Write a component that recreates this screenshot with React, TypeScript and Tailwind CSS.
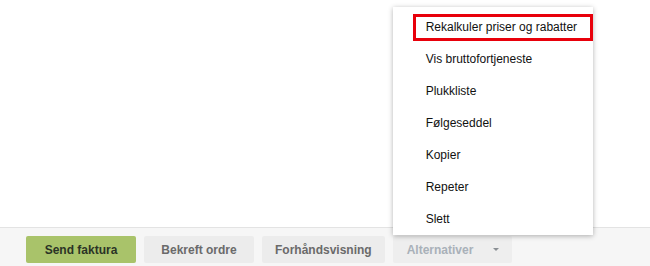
import { useState } from "react";

const menuItems = [
  "Rekalkuler priser og rabatter",
  "Vis bruttofortjeneste",
  "Plukkliste",
  "Følgeseddel",
  "Kopier",
  "Repeter",
  "Slett",
];

export default function App() {
  const [open, setOpen] = useState(true);

  return (
    <div
      className="w-[650px] h-[266px] flex flex-col bg-white overflow-hidden"
      style={{ fontFamily: '"Liberation Sans", Arial, sans-serif' }}
    >
      <div className="flex-1" />

      {/* Footer actions */}
      <div className="h-[39px] border-t border-[#e3e3e3] bg-[#f6f6f6] flex items-start gap-2 pl-[26px] pt-[8px]">
        <button className="h-[27px] min-w-[110px] px-[13px] rounded-[2px] bg-[#a9c36a] text-[12px] font-bold text-[#2b3326]">
          Send faktura
        </button>
        <button className="h-[27px] min-w-[110px] px-[13px] rounded-[2px] bg-[#ececec] text-[12px] font-bold text-[#6a6a6a]">
          Bekreft ordre
        </button>
        <button className="h-[27px] min-w-[110px] px-[13px] rounded-[2px] bg-[#ececec] text-[12px] font-bold text-[#6a6a6a]">
          Forhåndsvisning
        </button>

        <div className="relative">
          <button
            onClick={() => setOpen(!open)}
            className="h-[27px] w-[119px] pl-[14px] pr-[13px] rounded-[2px] bg-[#eeeeee] text-[12px] font-bold text-[#a9b1b9] flex items-center justify-between"
          >
            <span>Alternativer</span>
            <span className="w-0 h-0 border-l-[3px] border-r-[3px] border-t-[3px] border-l-transparent border-r-transparent border-t-[#8a8f94]" />
          </button>

          {open && (
            <div className="absolute left-0 bottom-full mb-[1px] w-[200px] bg-white pt-[4px] shadow-[0_1px_5px_rgba(0,0,0,0.3)]">
              {menuItems.map((item) => (
                <div key={item} className="h-[32px] pl-[33px] flex items-center text-[12px] text-[#111] whitespace-nowrap">
                  {item}
                </div>
              ))}
              {/* highlight annotation */}
              <div className="absolute left-[20px] top-[7px] w-[180px] h-[27px] border-[3px] border-[#e8000b] pointer-events-none" />
            </div>
          )}
        </div>
      </div>
    </div>
  );
}
